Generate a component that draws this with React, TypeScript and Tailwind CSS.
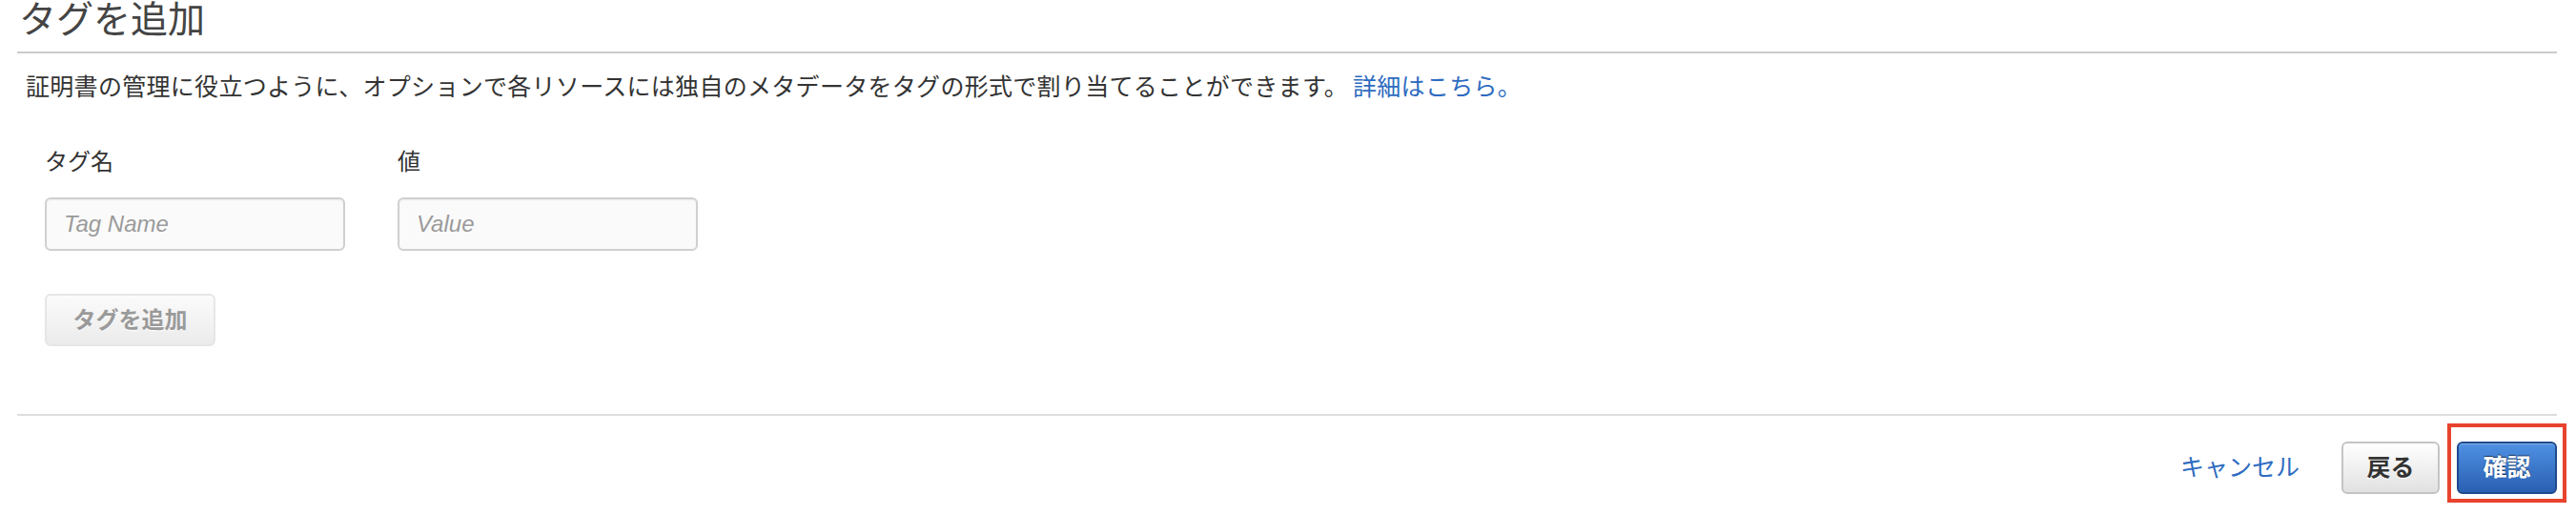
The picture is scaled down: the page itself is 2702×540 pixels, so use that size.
import React from 'react';

const font = "font-['Liberation_Sans','Noto_Sans_CJK_JP',sans-serif]";

function TagField({ label, placeholder, width }: { label: string; placeholder: string; width: string }) {
  return (
    <div className="flex flex-col">
      <label className="text-[24px] leading-[25px] text-[#333]">{label}</label>
      <input
        placeholder={placeholder}
        className={`mt-[25px] h-[56px] ${width} rounded-[6px] border-2 border-[#d0d0d0] bg-[#fafafa] px-[18px] text-[24px] text-[#333] shadow-[inset_0_1px_2px_rgba(0,0,0,0.06)] outline-none placeholder:italic placeholder:text-[#9a9a9a]`}
      />
    </div>
  );
}

export default function App() {
  return (
    <div className={`w-full bg-white pb-[10px] pl-[18px] pr-[20px] text-[#333] ${font}`}>
      {/* Header */}
      <div className="h-[56px] border-b-2 border-[#cccccc]">
        <h1 className="pl-[2px] pt-[1px] text-[39px] leading-[40px] font-normal text-[#444]">タグを追加</h1>
      </div>

      {/* Description */}
      <p className="mt-[23px] pl-[9px] text-[25px] leading-[25px] tracking-[0.3px] text-[#333]">
        証明書の管理に役立つように、オプションで各リソースには独自のメタデータをタグの形式で割り当てることができます。
        <a href="#" className="ml-[5px] text-[#2d6bc0]">詳細はこちら。</a>
      </p>

      {/* Tag form */}
      <div className="pl-[29px]">
        <div className="mt-[53px] flex gap-[55px]">
          <TagField label="タグ名" placeholder="Tag Name" width="w-[315px]" />
          <TagField label="値" placeholder="Value" width="w-[315px]" />
        </div>
        <button
          disabled
          className="mt-[45px] h-[55px] w-[179px] rounded-[6px] border-2 border-[#e6e6e6] bg-linear-to-b from-[#fbfbfb] to-[#ebebeb] text-[24px] font-bold text-[#9a9a9a] [text-shadow:0_1px_0_#fff]"
        >
          タグを追加
        </button>
      </div>

      {/* Footer */}
      <div className="mt-[71px] flex items-center justify-end border-t-2 border-[#dddddd] pt-[27px]">
        <a href="#" className="mr-[44px] text-[25px] leading-[25px] text-[#2d6bc0]">キャンセル</a>
        <button className="h-[55px] w-[103px] rounded-[6px] border-2 border-[#c4c4c4] bg-linear-to-b from-[#ffffff] to-[#e1e1e1] text-[25px] font-bold text-[#333] [text-shadow:0_1px_0_#fff]">
          戻る
        </button>
        <div className="relative ml-[18px]">
          <button className="h-[55px] w-[105px] rounded-[6px] border-2 border-[#1f4a8c] bg-linear-to-b from-[#4f91e3] to-[#2a5fb2] text-[25px] font-bold text-white [text-shadow:0_-1px_1px_rgba(0,0,0,0.55)] shadow-[inset_0_1px_0_rgba(255,255,255,0.3)]">
            確認
          </button>
          <div className="pointer-events-none absolute -top-[19px] -bottom-[9px] -left-[10px] -right-[10px] border-4 border-[#e8432e]" />
        </div>
      </div>
    </div>
  );
}
